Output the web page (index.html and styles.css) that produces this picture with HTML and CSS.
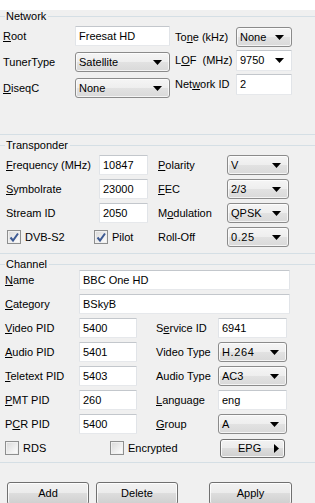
FILE: index.html
```html
<!DOCTYPE html>
<html>
<head>
<meta charset="utf-8">
<link rel="stylesheet" href="styles.css">
</head>
<body>
<div class="top"></div>

<section class="group g-net">
  <div class="legend"><span>Network</span></div>
  <div class="body net-body">
    <div class="col col-l">
      <div class="row r-l"><span class="lbl w72"><u>R</u>oot</span><div class="input w95">Freesat HD</div></div>
      <div class="row r-l"><span class="lbl w72">TunerType</span><div class="combo w95"><span>Satellite</span><svg width="9" height="5" viewBox="0 0 9 5"><path d="M0 0H9L4.5 5Z"/></svg></div></div>
      <div class="row r-l"><span class="lbl w72"><u>D</u>iseqC</span><div class="combo w95"><span>None</span><svg width="9" height="5" viewBox="0 0 9 5"><path d="M0 0H9L4.5 5Z"/></svg></div></div>
    </div>
    <div class="col col-r">
      <div class="row r-r"><span class="lbl w61">To<u>n</u>e (kHz)</span><div class="combo w56"><span>None</span><svg width="9" height="5" viewBox="0 0 9 5"><path d="M0 0H9L4.5 5Z"/></svg></div></div>
      <div class="row r-r h21"><span class="lbl w61">L<u>O</u>F&nbsp; (MHz)</span><div class="combo edit w56"><span>9750</span><svg width="9" height="5" viewBox="0 0 9 5"><path d="M0 0H9L4.5 5Z"/></svg></div></div>
      <div class="row r-r h21"><span class="lbl w61">Net<u>w</u>ork ID</span><div class="input w56">2</div></div>
    </div>
  </div>
</section>

<section class="group g-trans">
  <div class="legend"><span>Transponder</span></div>
  <div class="body trans-body">
    <div class="row"><span class="lbl w93"><u>F</u>requency (MHz)</span><div class="input w49">10847</div><span class="lbl w69 ml10"><u>P</u>olarity</span><div class="combo w62"><span>V</span><svg width="9" height="5" viewBox="0 0 9 5"><path d="M0 0H9L4.5 5Z"/></svg></div></div>
    <div class="row"><span class="lbl w93"><u>S</u>ymbolrate</span><div class="input w49">23000</div><span class="lbl w69 ml10"><u>F</u>EC</span><div class="combo w62"><span>2/3</span><svg width="9" height="5" viewBox="0 0 9 5"><path d="M0 0H9L4.5 5Z"/></svg></div></div>
    <div class="row"><span class="lbl w93">Stream ID</span><div class="input w49">2050</div><span class="lbl w69 ml10">M<u>o</u>dulation</span><div class="combo w62"><span>QPSK</span><svg width="9" height="5" viewBox="0 0 9 5"><path d="M0 0H9L4.5 5Z"/></svg></div></div>
    <div class="row">
      <div class="chk ml1 w87"><span class="cb"><svg width="12" height="12" viewBox="0 0 12 12"><path d="M2.5 6.5L5 9.5L10 2.5" fill="none" stroke="#3d5a93" stroke-width="2"/></svg></span><span>DVB-S2</span></div>
      <div class="chk w64"><span class="cb"><svg width="12" height="12" viewBox="0 0 12 12"><path d="M2.5 6.5L5 9.5L10 2.5" fill="none" stroke="#3d5a93" stroke-width="2"/></svg></span><span>Pilot</span></div>
      <span class="lbl w69">Roll-Off</span><div class="combo w62"><span class="mono">0.25</span><svg width="9" height="5" viewBox="0 0 9 5"><path d="M0 0H9L4.5 5Z"/></svg></div>
    </div>
  </div>
</section>

<section class="group g-chan">
  <div class="legend"><span>Channel</span></div>
  <div class="body chan-body">
    <div class="row"><span class="lbl w74"><u>N</u>ame</span><div class="input w211">BBC One HD</div></div>
    <div class="row"><span class="lbl w74"><u>C</u>ategory</span><div class="input w211">BSkyB</div></div>
    <div class="row"><span class="lbl w74"><u>V</u>ideo PID</span><div class="input w58">5400</div><span class="lbl w62 ml19">S<u>e</u>rvice ID</span><div class="input w69">6941</div></div>
    <div class="row"><span class="lbl w74"><u>A</u>udio PID</span><div class="input w58">5401</div><span class="lbl w62 ml19">Video Type</span><div class="combo w69"><span class="mono">H.264</span><svg width="9" height="5" viewBox="0 0 9 5"><path d="M0 0H9L4.5 5Z"/></svg></div></div>
    <div class="row"><span class="lbl w74"><u>T</u>eletext PID</span><div class="input w58">5403</div><span class="lbl w62 ml19">Audio Type</span><div class="combo w69"><span>AC3</span><svg width="9" height="5" viewBox="0 0 9 5"><path d="M0 0H9L4.5 5Z"/></svg></div></div>
    <div class="row"><span class="lbl w74"><u>P</u>MT PID</span><div class="input w58">260</div><span class="lbl w62 ml19"><u>L</u>anguage</span><div class="input w69">eng</div></div>
    <div class="row"><span class="lbl w74">P<u>C</u>R PID</span><div class="input w58">5400</div><span class="lbl w62 ml19"><u>G</u>roup</span><div class="combo w69"><span>A</span><svg width="9" height="5" viewBox="0 0 9 5"><path d="M0 0H9L4.5 5Z"/></svg></div></div>
    <div class="row">
      <div class="chk w105"><span class="cb"></span><span>RDS</span></div>
      <div class="chk w110"><span class="cb"></span><span>Encrypted</span></div>
      <div class="btn epg"><span>EPG</span><svg width="5" height="9" viewBox="0 0 5 9"><path d="M0 0L5 4.5L0 9Z"/></svg></div>
    </div>
  </div>
</section>

<div class="buttons">
  <div class="btn b-add">Add</div>
  <div class="btn b-del">Delete</div>
  <div class="btn b-apply">Apply</div>
</div>
</body>
</html>
```

FILE: styles.css
```css
* { box-sizing: border-box; }
html, body { margin: 0; padding: 0; }
body {
  width: 315px;
  height: 503px;
  overflow: hidden;
  background: #f0f0f0;
  color: #000;
  font: 11px/13px "Liberation Sans", Arial, sans-serif;
}
u { text-decoration: underline; text-underline-offset: 1px; }

.top { height: 10px; background: #fff; }

.group { border-bottom: 1px solid #d5dfe5; }
.legend { display: flex; align-items: center; height: 12px; }
.legend::before { content: ""; width: 5px; border-top: 1px solid #d5dfe5; }
.legend::after { content: ""; flex: 1; border-top: 1px solid #d5dfe5; margin-left: 2px; }
.legend span { padding-left: 1px; }

.g-trans, .g-chan { margin-top: 4px; }

.net-body { display: flex; height: 112px; padding: 4px 0 0 3px; }
.col-r { margin-left: 5px; padding-top: 1px; }
.trans-body { height: 102px; padding: 4px 0 0 6px; }
.chan-body { height: 192px; padding: 0 0 0 5px; }

.row { display: flex; align-items: center; height: 20px; margin-bottom: 4px; }
.r-l { margin-bottom: 6px; }
.r-r { margin-bottom: 3px; }
.h21 { height: 21px; }

.lbl { white-space: nowrap; flex: none; }
.w49 { width: 49px; } .w56 { width: 56px; } .w58 { width: 58px; }
.w61 { width: 61px; } .w62 { width: 62px; } .w64 { width: 64px; }
.w69 { width: 69px; } .w72 { width: 72px; } .w74 { width: 74px; }
.w87 { width: 87px; } .w93 { width: 93px; } .w95 { width: 95px; }
.w105 { width: 105px; } .w110 { width: 110px; } .w211 { width: 211px; }
.ml1 { margin-left: 1px; } .ml10 { margin-left: 10px; } .ml19 { margin-left: 19px; }

.input {
  flex: none;
  height: 100%;
  display: flex;
  align-items: center;
  padding: 0 3px;
  background: #fff;
  border: 1px solid;
  border-color: #c3c7cc #e1e4e8 #e6e8eb #e1e4e8;
  border-radius: 1px;
  white-space: nowrap;
}

.combo {
  flex: none;
  height: 100%;
  display: flex;
  align-items: center;
  justify-content: space-between;
  padding: 0 7px 0 3px;
  border: 1px solid #8b8b8b;
  border-radius: 3px;
  background: linear-gradient(#f5f5f5, #eeeeee 50%, #e2e2e2 50%, #d9d9d9);
  box-shadow: inset 0 0 0 1px rgba(255,255,255,0.7);
  white-space: nowrap;
}
.combo svg { flex: none; fill: #000; }
.combo.edit {
  background: #fff;
  border-color: #c3c7cc #e1e4e8 #e6e8eb #e1e4e8;
  border-radius: 1px;
  box-shadow: none;
}
.mono { letter-spacing: 0.6px; }

.chk { display: flex; align-items: center; flex: none; }
.cb {
  flex: none;
  width: 14px;
  height: 14px;
  margin-right: 4px;
  border: 1px solid #8e8f8f;
  background: linear-gradient(135deg, #d8d8d8, #f4f4f4 70%, #ffffff);
  box-shadow: inset 0 0 0 1px #f0f0f0;
  display: flex;
  align-items: center;
  justify-content: center;
}

.btn {
  flex: none;
  height: 23px;
  display: flex;
  align-items: center;
  justify-content: center;
  border: 1px solid #707070;
  border-radius: 3px;
  background: linear-gradient(#f2f2f2, #ebebeb 50%, #dddddd 50%, #cfcfcf);
  box-shadow: inset 0 0 0 1px rgba(255,255,255,0.8);
}
.epg {
  width: 65px;
  height: 19px;
  justify-content: flex-start;
  padding: 0 5px 0 17px;
}
.epg svg { margin-left: auto; fill: #000; }

.buttons { display: flex; padding-top: 19px; }
.b-add { width: 82px; margin-left: 7px; }
.b-del { width: 82px; margin-left: 7px; }
.b-apply { width: 83px; margin-left: 31px; }
```
